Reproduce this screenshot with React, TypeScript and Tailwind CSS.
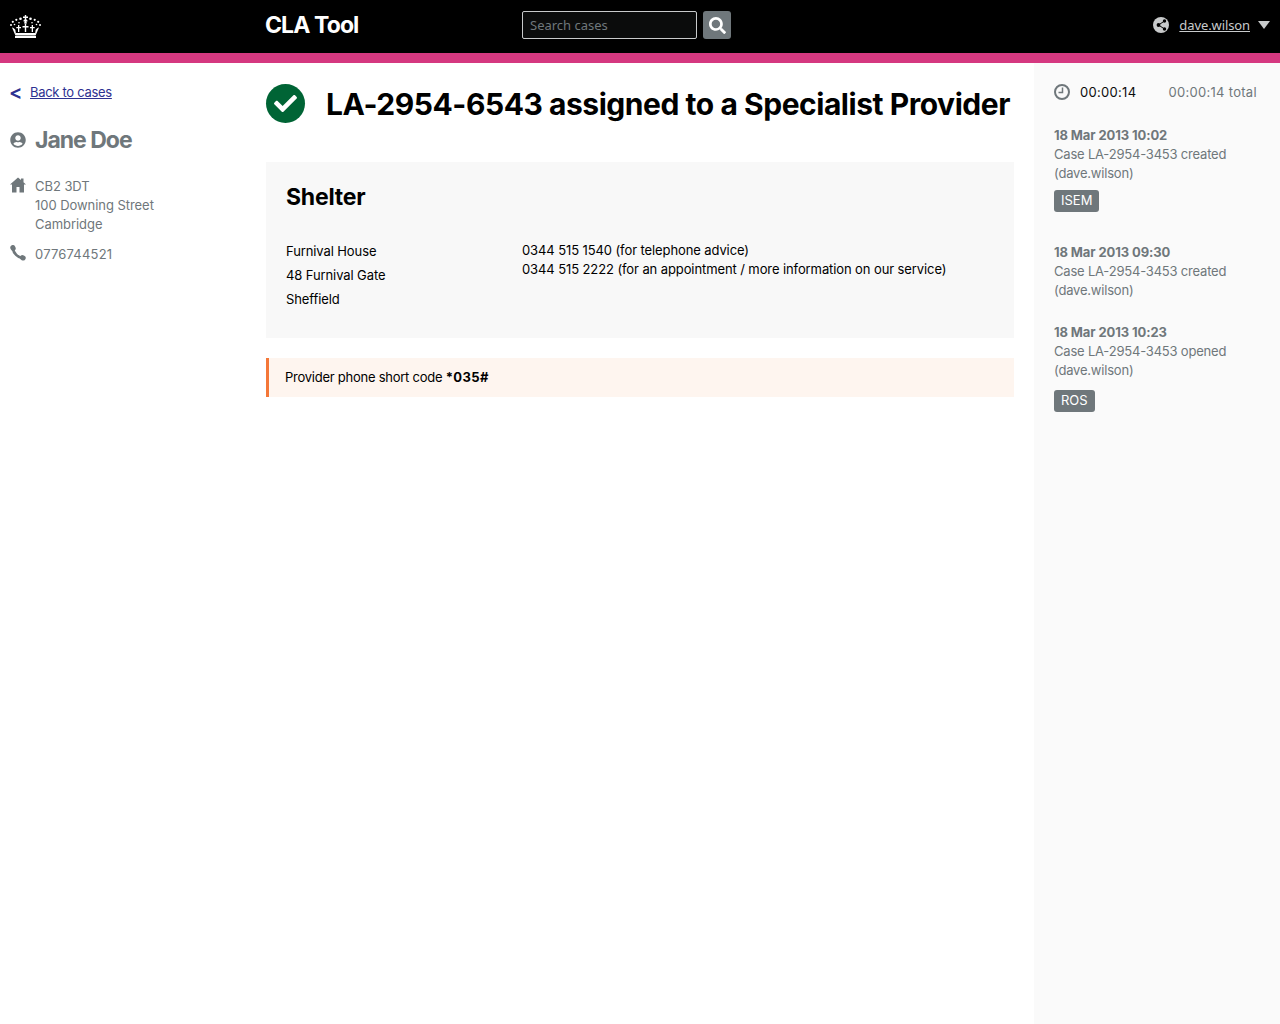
import { FaCheck, FaSearch, FaUserCircle } from "react-icons/fa";

const timeline = [
    { date: "18 Mar 2013 10:02", text: "Case LA-2954-3453 created", tag: "ISEM", tagGap: "mt-[7px]", gap: "mb-[31px]" },
    { date: "18 Mar 2013 09:30", text: "Case LA-2954-3453 created", gap: "mb-[23px]" },
    { date: "18 Mar 2013 10:23", text: "Case LA-2954-3453 opened", tag: "ROS", tagGap: "mt-[10px]", gap: "" },
];

function Crown() {
    return (
        <svg width="31" height="23" viewBox="0 0 31 23" fill="white">
            <path d="M14.800 0h1.400v1.500h1.800v1.400h-1.800v1.700c1 .3 1.500 1 1.300 1.900l-1.100-.3.500 2.300h-2.800l.5-2.300-1.100.3c-.2-.9.3-1.600 1.300-1.900V2.900H13V1.500h1.800z" />
            <circle cx="10.500" cy="3.800" r="1.300" />
            <circle cx="20.500" cy="3.800" r="1.300" />
            <circle cx="6.300" cy="4.800" r="1.100" />
            <circle cx="24.700" cy="4.800" r="1.100" />
            <circle cx="2.800" cy="6.800" r="1.100" />
            <circle cx="28.200" cy="6.800" r="1.100" />
            <circle cx="1" cy="10" r="1" />
            <circle cx="30" cy="10" r="1" />
            <circle cx="9" cy="7.800" r="0.800" />
            <circle cx="22" cy="7.800" r="0.800" />
            <circle cx="4.500" cy="9.500" r="0.800" />
            <circle cx="26.500" cy="9.500" r="0.800" />
            <path d="M14.800 8.500h1.400v2.600h2.300v1.400h-2.300V17h-1.400v-4.500h-2.300v-1.400h2.300zM8 10h1.300v2H11v1.300H9.300V17H8v-3.700H6.300V12H8zM21.700 10H23v2h1.700v1.300H23V17h-1.300v-3.700H20V12h1.700z" />
            <path d="M2 12.500c1.200.2 2.400 1 3.300 2.200l.7 4.300c.500.300 1 .5 1.500.5H23.500c.5 0 1-.2 1.500-.5l.7-4.300c.9-1.200 2.100-2 3.300-2.200L26 19.500l-.5 1H5.500l-.5-1z" />
            <path d="M6 18h19v2H6z" />
            <rect x="5" y="21" width="21" height="2" />
        </svg>
    );
}

function ShareGlobe() {
    return (
        <svg width="16" height="16" viewBox="0 0 16 16" className="text-[#c8cacb]">
            <circle cx="8" cy="8" r="8" fill="currentColor" />
            <g fill="#000" stroke="#000">
                <circle cx="11.500" cy="4" r="1.700" stroke="none" />
                <circle cx="5.500" cy="8" r="1.900" stroke="none" />
                <circle cx="11.500" cy="12" r="1.700" stroke="none" />
                <path d="M11.500 4 5.500 8l6 4" fill="none" strokeWidth="1" />
            </g>
        </svg>
    );
}

function Clock() {
    return (
        <svg width="16" height="16" viewBox="0 0 16 16" fill="none" stroke="#6f777b" strokeWidth="2">
            <circle cx="8" cy="8" r="7" />
            <path d="M8.500 3.500V8.500H4.500" strokeWidth="1.500" />
        </svg>
    );
}

function House() {
    return (
        <svg width="16" height="16" viewBox="0 0 16 16" fill="#6f777b" className="shrink-0">
            <path d="M8 .5 0 7.500h2V15.500h4.500V10h3v5.500H14V7.500h2l-2.500-2.300V1.500h-2.500v1.500z" />
        </svg>
    );
}

function Phone() {
    return (
        <svg width="16" height="16" viewBox="0 0 16 16" fill="#6f777b" className="shrink-0">
            <ellipse cx="3" cy="3" rx="2.600" ry="3" transform="rotate(-25 3 3)" />
            <ellipse cx="12.800" cy="12.800" rx="3" ry="2.600" transform="rotate(25 12.800 12.800)" />
            <path d="M3 4C3.500 8 8 12.500 12 13" fill="none" stroke="#6f777b" strokeWidth="2.600" />
        </svg>
    );
}

export default function App() {
    return (
        <div className="min-h-[1024px] bg-white font-['Inter',sans-serif] text-sm text-black">
            <header className="flex h-[53px] items-center bg-black pb-[3px] text-white">
                <div className="w-[265px] pl-[10px] pt-[2px]">
                    <Crown />
                </div>
                <div className="w-[257px] text-[23px] font-bold tracking-[-0.9px]">CLA Tool</div>
                <input
                    placeholder="Search cases"
                    className="h-7 w-[175px] rounded-[2px] border border-[#c8cacb] bg-[#0b0c0c] px-[7px] font-['Noto_Sans',sans-serif] text-[13px] placeholder:text-[#6f777b]"
                />
                <button className="ml-[6px] flex h-7 w-7 items-center justify-center rounded-[3px] bg-[#6f777b]">
                    <FaSearch size={17} />
                </button>
                <div className="ml-auto flex items-center pr-[10px] text-[#c8cacb]">
                    <ShareGlobe />
                    <a className="ml-[10px] font-['Noto_Sans',sans-serif] text-[13px] tracking-[-0.1px] underline">dave.wilson</a>
                    <span className="ml-[8px] h-0 w-0 border-x-[6px] border-t-[8px] border-x-transparent border-t-[#c8cacb]" />
                </div>
            </header>
            <div className="h-[10px] bg-[#d53880]" />
            <div className="flex min-h-[961px]">
                <aside className="w-[266px] pl-[9px] text-[#6f777b]">
                    <div className="mt-[20px] flex items-center text-[#2e3191]">
                        <span className="w-[21px] text-[20px] leading-[18px] font-semibold">&lt;</span>
                        <a className="text-[13px] leading-[18px] tracking-[-0.3px] underline">Back to cases</a>
                    </div>
                    <div className="mt-[23px] flex items-center pl-px">
                        <FaUserCircle size={16} />
                        <span className="ml-[9px] text-[23px] leading-[32px] font-bold tracking-[-1px]">Jane Doe</span>
                    </div>
                    <div className="mt-[21px] flex items-start pl-px text-[13px] leading-[19px]">
                        <House />
                        <div className="ml-[9px] tracking-[-0.05px]">
                            CB2 3DT
                            <br />
                            100 Downing Street
                            <br />
                            Cambridge
                        </div>
                    </div>
                    <div className="mt-[11px] flex items-start pl-px text-[13px] leading-[19px]">
                        <Phone />
                        <div className="ml-[9px] tracking-[0.2px]">0776744521</div>
                    </div>
                </aside>
                <main className="w-[748px]">
                    <div className="mt-[21px] flex h-[40px] items-center">
                        <span className="mb-[2px] flex h-[39px] w-[39px] items-center justify-center rounded-full bg-[#006435] text-white">
                            <FaCheck size={23} />
                        </span>
                        <h1 className="ml-[21px] text-[30px] leading-[40px] font-bold tracking-[-0.46px] whitespace-nowrap">
                            LA-2954-6543 assigned to a Specialist Provider
                        </h1>
                    </div>
                    <section className="mt-[38px] h-[176px] bg-[#f8f8f8] px-5 pt-[19px]">
                        <h2 className="text-[23px] leading-[32px] font-bold tracking-[-0.2px]">Shelter</h2>
                        <div className="mt-[26px] flex text-[13px] tracking-[-0.1px]">
                            <div className="w-[236px] leading-[24px]">
                                Furnival House
                                <br />
                                48 Furnival Gate
                                <br />
                                Sheffield
                            </div>
                            <div className="pt-[2px] leading-[19px]">
                                0344 515 1540 (for telephone advice)
                                <br />
                                0344 515 2222 (for an appointment / more information on our service)
                            </div>
                        </div>
                    </section>
                    <div className="mt-5 h-[39px] border-l-[3px] border-[#f47738] bg-[#fef5ef] pl-4 text-[13px] leading-[39px] tracking-[-0.25px]">
                        Provider phone short code <strong className="tracking-[0.4px]">*035#</strong>
                    </div>
                </main>
                <aside className="ml-5 w-[246px] bg-[#fafafa] pl-5 text-[13px] leading-[19px] text-[#6f777b]">
                    <div className="mt-[19px] flex h-5 items-center tracking-[0.3px]">
                        <Clock />
                        <span className="ml-[10px] text-[#0b0c0c]">00:00:14</span>
                        <span className="ml-8">00:00:14 total</span>
                    </div>
                    <div className="mt-[24px] tracking-[-0.2px]">
                        {timeline.map((item) => (
                            <div key={item.date} className={item.gap}>
                                <div className="font-bold tracking-[-0.1px]">{item.date}</div>
                                <div>{item.text}</div>
                                <div>(dave.wilson)</div>
                                {item.tag && (
                                    <span className={`${item.tagGap} inline-block h-[22px] rounded-[3px] bg-[#6f777b] px-[7px] leading-[20px] tracking-normal text-white`}>
                                        {item.tag}
                                    </span>
                                )}
                            </div>
                        ))}
                    </div>
                </aside>
            </div>
        </div>
    );
}
